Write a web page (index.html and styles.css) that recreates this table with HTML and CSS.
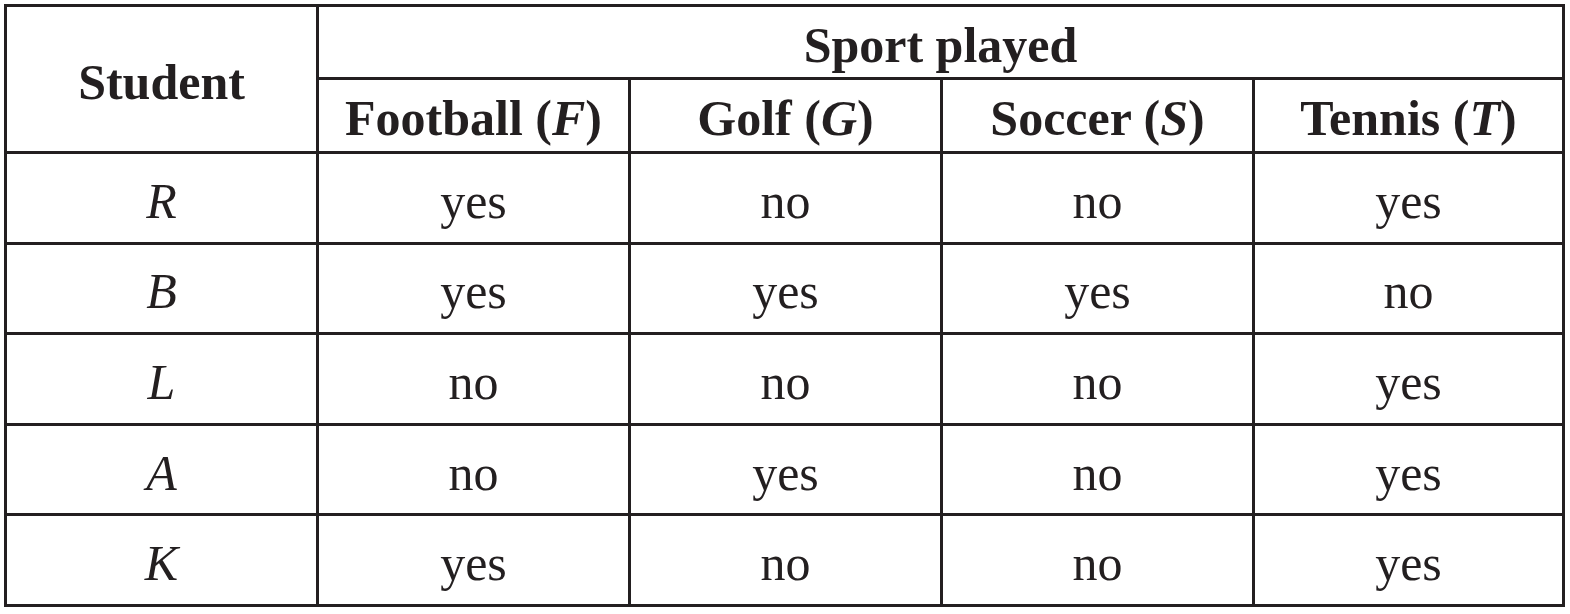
FILE: index.html
```html
<!DOCTYPE html>
<html>
<head>
<meta charset="utf-8">
<link rel="stylesheet" href="styles.css">
</head>
<body>
<div class="table">
  <div class="cell head student">Student</div>
  <div class="cell head sport">Sport played</div>
  <div class="cell head">Football (<i>F</i>)</div>
  <div class="cell head">Golf (<i>G</i>)</div>
  <div class="cell head">Soccer (<i>S</i>)</div>
  <div class="cell head">Tennis (<i>T</i>)</div>

  <div class="cell"><i>R</i></div><div class="cell">yes</div><div class="cell">no</div><div class="cell">no</div><div class="cell">yes</div>
  <div class="cell"><i>B</i></div><div class="cell">yes</div><div class="cell">yes</div><div class="cell">yes</div><div class="cell">no</div>
  <div class="cell"><i>L</i></div><div class="cell">no</div><div class="cell">no</div><div class="cell">no</div><div class="cell">yes</div>
  <div class="cell"><i>A</i></div><div class="cell">no</div><div class="cell">yes</div><div class="cell">no</div><div class="cell">yes</div>
  <div class="cell"><i>K</i></div><div class="cell">yes</div><div class="cell">no</div><div class="cell">no</div><div class="cell">yes</div>
</div>
</body>
</html>
```

FILE: styles.css
```css
html, body {
  margin: 0;
  padding: 0;
  background: #ffffff;
}
body {
  padding: 4px 0 0 4px;
  font-family: "Liberation Serif", "Times New Roman", serif;
  color: #231f20;
}
.table {
  display: grid;
  grid-template-columns: 309px 309px 309px 309px 307px;
  grid-template-rows: 70px 71px repeat(5, 1fr);
  gap: 3px;
  padding: 3px;
  width: 1555px;
  height: 597px;
  background: #231f20;
}
.cell {
  background: #ffffff;
  display: flex;
  align-items: center;
  justify-content: center;
  font-size: 50px;
  line-height: 1;
  padding-top: 6px;
}
.head {
  font-weight: bold;
  padding-top: 5px;
}
.student {
  grid-row: 1 / 3;
}
.sport {
  grid-column: 2 / 6;
}
```
